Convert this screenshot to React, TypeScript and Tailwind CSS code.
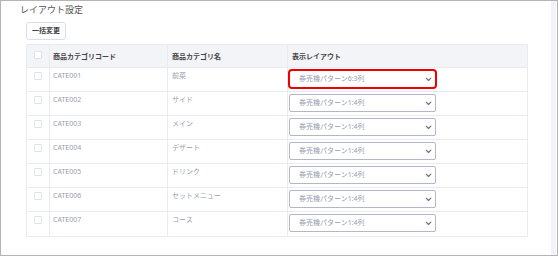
import React from "react";

const rows = [
  { code: "CATE001", name: "前菜", layout: "券売機パターン6:3列", hl: true },
  { code: "CATE002", name: "サイド", layout: "券売機パターン1:4列" },
  { code: "CATE003", name: "メイン", layout: "券売機パターン1:4列" },
  { code: "CATE004", name: "デザート", layout: "券売機パターン1:4列" },
  { code: "CATE005", name: "ドリンク", layout: "券売機パターン1:4列" },
  { code: "CATE006", name: "セットメニュー", layout: "券売機パターン1:4列" },
  { code: "CATE007", name: "コース", layout: "券売機パターン1:4列" },
];

function Chevron() {
  return (
    <svg width="7" height="5" viewBox="0 0 7 5" className="shrink-0">
      <polyline points="1.2,1.2 3.5,3.5 5.8,1.2" fill="none" stroke="#6b7080" strokeWidth="1.1" strokeLinecap="round" strokeLinejoin="round" />
    </svg>
  );
}

function Box() {
  return <div className="w-[8px] h-[8px] border border-[#dfe2ea] rounded-[1px] bg-white" />;
}

export default function App() {
  return (
    <div className="w-[558px] h-[256px] border border-[#b4b4b4] bg-white flex font-['Noto_Sans','Noto_Sans_CJK_JP',sans-serif]">
      <div className="flex-1 flex flex-col">
        <div className="pl-[19px] pt-[2px] text-[9px] leading-[14px] text-[#555]">レイアウト設定</div>
        <div className="pl-[25px] pt-[5px] flex">
          <div className="h-[18px] px-[5px] border border-[#d6dfec] rounded-[3px] text-[7px] leading-[16px] font-semibold text-[#444] flex items-center">一括変更</div>
        </div>
        <div className="ml-[25px] mt-[4px] w-[502px] border border-[#e8ebf2] text-[7px]">
          <div className="flex h-[23px] bg-[#f3f4f7] border-b border-[#e8ebf2]">
            <div className="w-[23px] border-r border-[#e8ebf2] flex justify-center pt-[6px]"><Box /></div>
            <div className="w-[118px] border-r border-[#e8ebf2] pl-[3px] pt-[7px] leading-[10px] font-bold text-[#444]">商品カテゴリコード</div>
            <div className="w-[120px] border-r border-[#e8ebf2] pl-[4px] pt-[7px] leading-[10px] font-bold text-[#444]">商品カテゴリ名</div>
            <div className="flex-1 pl-[4px] pt-[7px] leading-[10px] font-bold text-[#444]">表示レイアウト</div>
          </div>
          {rows.map((r, i) => (
            <div key={r.code} className={"flex h-[24px] " + (i < rows.length - 1 ? "border-b border-[#e8ebf2]" : "")}>
              <div className="w-[23px] border-r border-[#e8ebf2] flex justify-center pt-[4px]"><Box /></div>
              <div className="w-[118px] border-r border-[#e8ebf2] pl-[3px] pt-[3px] leading-[10px] text-[#9aa0ad]">{r.code}</div>
              <div className="w-[120px] border-r border-[#e8ebf2] pl-[4px] pt-[3px] leading-[10px] text-[#9aa0ad]">{r.name}</div>
              <div className="flex-1">
                {r.hl ? (
                  <div className="mt-[1px] w-[149px] h-[20px] border-2 border-[#ee0000] rounded-[4px] flex items-center justify-between pl-[9px] pr-[3px] text-[#9aa0b0] leading-[10px]">
                    <span>{r.layout}</span>
                    <Chevron />
                  </div>
                ) : (
                  <div className="mt-[2px] ml-[1px] w-[147px] h-[18px] border border-[#b3b7c8] rounded-[2px] flex items-center justify-between pl-[9px] pr-[3px] text-[#9aa0b0] leading-[10px]">
                    <span>{r.layout}</span>
                    <Chevron />
                  </div>
                )}
              </div>
            </div>
          ))}
        </div>
      </div>
      <div className="w-[5px] bg-[#f2f3f8] mr-[1px]" />
    </div>
  );
}
